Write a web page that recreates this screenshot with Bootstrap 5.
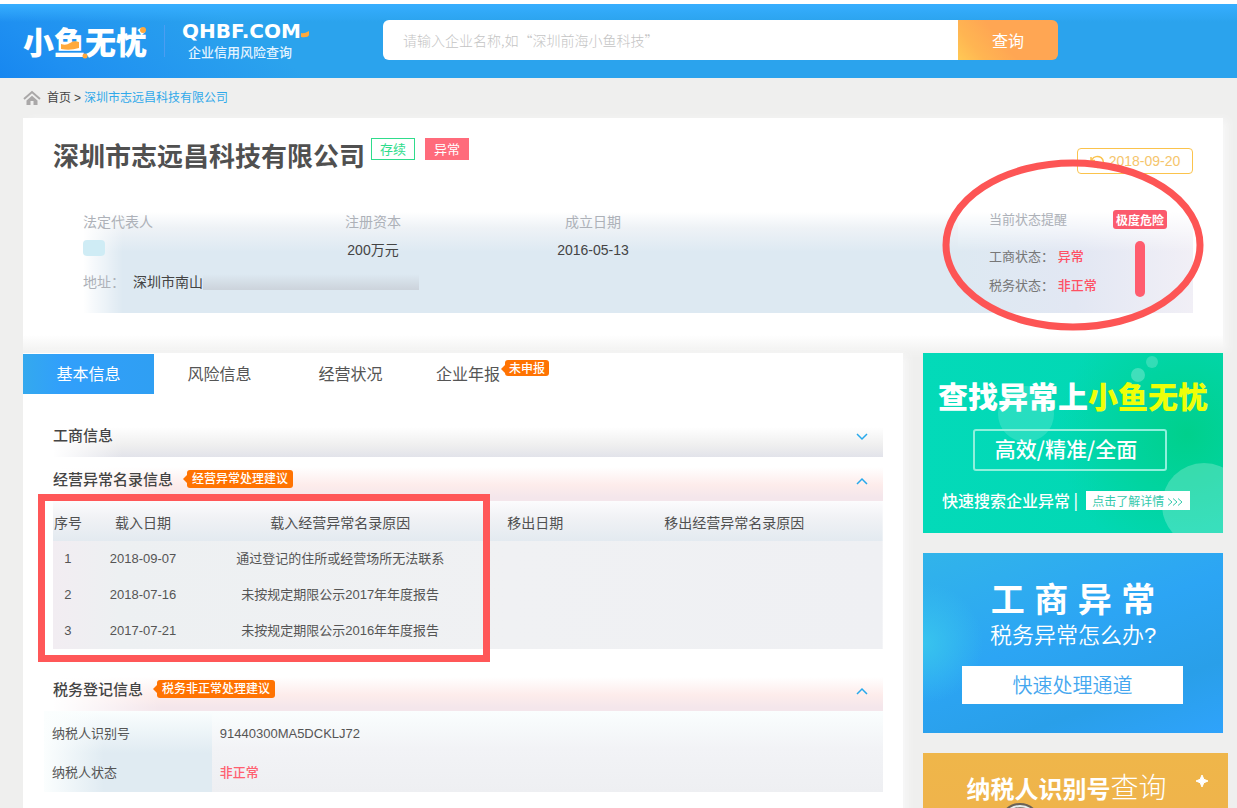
<!DOCTYPE html>
<html lang="zh-CN">
<head>
<meta charset="utf-8">
<meta name="viewport" content="width=device-width, initial-scale=1">
<title>深圳市志远昌科技有限公司 - 小鱼无忧</title>
<link rel="stylesheet" href="https://cdn.jsdelivr.net/npm/bootstrap@5.3.0/dist/css/bootstrap.min.css">
<style>
  body { font-family: "Liberation Sans", "Noto Sans CJK SC", sans-serif; font-size: 13px; line-height: 20px; color: #555; background: #efefee; overflow-x: hidden; }
  a { text-decoration: none; }
  .cjk { font-family: "Noto Sans CJK SC", sans-serif; }
  .page-x { padding-left: 23px; padding-right: 14px; }

  /* header */
  .site-head { border-top: 4px solid #fff; height: 78px; background: linear-gradient(to bottom, #36aeff 0, rgba(54,174,255,0) 18px), linear-gradient(38deg, #1787f0 0, #1f90f1 50px, #2ba3ed 190px); }
  .brand-name { font-size: 31px; line-height: 40px; font-weight: 900; color: #fff; width: 124px; white-space: nowrap; }
  .brand-dots { left: 0; top: 0; }
  .brand-split { width: 1px; height: 32px; margin: 0 17px; background: #4b9df2; }
  .brand-url { font: bold 20px/22px "DejaVu Sans", sans-serif; color: #fff; }
  .brand-sub { font-size: 13px; line-height: 20px; font-weight: 500; color: #e4f4ff; padding-left: 6px; }
  .search-box { width: 675px; margin-left: 74px; margin-bottom: 2px; }
  .search-box .form-control { height: 40px; border: 0; border-radius: 6px; padding: 0 20px; font-size: 14px; }
  .search-box .form-control::placeholder { color: #c4c4c4; font-weight: 300; }
  .search-box .btn { width: 100px; border: 0; border-radius: 6px; color: #fff; font-size: 16px; background: linear-gradient(50deg, #ffc955 0, #ffb552 20%, #ffa653 45%, #ffa653 100%); }

  .crumbs { height: 40px; font-size: 12px; color: #444; }
  .crumbs svg { margin-right: 6px; }
  .crumbs span { margin: 0 3px; }
  .crumbs a { color: #444; }
  .crumbs .here { color: #2fa9ea; }

  /* company card */
  .company { background: linear-gradient(to top, #f1f1f0 0, #fff 18px); padding: 19px 30px 40px; box-shadow: 6px 0 8px -2px #f8f8f8; }
  .company h1 { font-size: 26px; line-height: 40px; font-weight: 700; color: #505050; margin: 0 6px 0 0; }
  .tagbox { width: 44px; height: 22px; line-height: 21px; font-size: 13px; text-align: center; border: 1px solid #2fdc8c; color: #2fdc8c; margin: 1px 10px 0 0; }
  .tagbox.bad { border-color: #ff6b7b; background: #ff6b7b; color: #fff; }
  .refresh { height: 26px; width: 116px; border: 1px solid #fbc34c; border-radius: 4px; background: #fff; color: #f5c56c; font-size: 14px; padding: 0; margin-top: 11px; white-space: nowrap; }
  .facts { margin: 35px 0 0 30px; font-size: 14px; background: linear-gradient(to right, #fff 0, rgba(255,255,255,0) 40px), linear-gradient(to bottom, #fff 0, #eef2f6 16px, #dde9f2 40px, #dde9f2 100%); color: #444; }
  .facts .dim { color: #adb1b8; }
  .facts-body { padding-bottom: 21px; }
  .fact-a { width: 235px; } .fact-b { width: 110px; } .fact-c { width: 110px; margin-left: 110px; }
  .masked { width: 216px; height: 16px; background: linear-gradient(to bottom, rgba(204,211,219,0) 0, #ccd3db 100%); }
  .redact { width: 22px; height: 16px; background: #cfecf5; border-radius: 4px; }
  .risk { width: 235px; padding: 0 26px 0 31px; font-size: 13px; line-height: 29px; color: #777; background: linear-gradient(to bottom, #fff 0, rgba(255,255,255,0) 40px), linear-gradient(to right, #dde9f2 0, #e2e7f3 50%, #f1eff6 100%); }
  .risk .dim { line-height: 16px; padding-bottom: 14px; }
  .risk b { color: #ff5064; font-weight: 500; }
  .risk-pill { background: #fb5a6d; color: #fff; font-size: 12px; font-weight: 700; line-height: 19px; height: 19px; width: 54px; text-align: center; border-radius: 3px; white-space: nowrap; margin-top: -2px; }
  .risk-bar { width: 10px; height: 56px; border-radius: 5px; background: #ff5c6e; margin: 12px 22px 0 0; }
  .ring { right: -12px; top: -54px; pointer-events: none; }

  /* main column */
  .main-col { background: #fff; padding-top: 1px; box-shadow: 6px 0 8px -2px #f8f8f8; margin-right: 20px; }
  .tabs-row .nav-link { width: 131px; height: 40px; padding: 0; font-size: 16px; line-height: 42px; color: #555; text-align: center; border-radius: 0; }
  .tabs-row .nav-link.active { color: #fff; background: linear-gradient(to right, #34a9ee 0, #319ffb 30%, #2f9ff3 100%); }
  .tabs-row .nav-link.tab-last { text-align: left; padding-left: 20px; }
  .hint { position: relative; display: inline-block; background: #ff7302; color: #fff; font-size: 12px; line-height: 18px; height: 18px; padding: 0 5px; border-radius: 3px; font-weight: 500; white-space: nowrap; }
  .hint::before { content: ""; position: absolute; left: -4px; top: 5px; border: 4px solid transparent; border-left: 0; border-right-color: #ff7302; }
  a.hint:hover { color: #fff; }
  .hint.tab-tip { position: absolute; left: 89px; top: 6px; height: 16px; line-height: 18px; padding: 0 4px; }
  .blocks { padding: 19px 20px 30px 30px; }
  .band { height: 44px; padding-top: 2px; background: linear-gradient(to right, #fff 0, rgba(255,255,255,0) 70px), linear-gradient(to bottom, #fff 14px, #efefef 32px, #e2e3ea 44px); }
  .band.warm { background: linear-gradient(to right, #fff 0, rgba(255,255,255,0) 110px), linear-gradient(to bottom, #fff 10px, #fdeceb 28px, #f4e6eb 40px); }
  .band h2 { font-size: 15px; line-height: 20px; font-weight: 500; color: #444; margin: 0 14px 0 0; }
  .band .hint { margin-bottom: 2px; }
  .fold { border: 0; background: none; padding: 0 15px 0 0; line-height: 1; }
  .marked { margin-bottom: 18px; }
  .mark-frame { left: -15px; top: -7px; bottom: -13px; width: 452px; border: 7px solid #ff5758; pointer-events: none; }
  .plain { width: 100%; table-layout: fixed; }
  .records th { height: 40px; font-size: 14px; font-weight: 400; text-align: center; color: #505050; padding: 4px 0 0; }
  .records th:last-child { padding-right: 8px; }
  .records thead { background: linear-gradient(to bottom, #fcfcfd 0, #f1f2f5 40%, #e3eaf0 100%); }
  .records tbody { background: linear-gradient(to right, #f2edf2 0, #edf0f2 8%, #f0f1f3 55%, #eff0f3 100%); }
  .records td { height: 36px; text-align: center; padding: 0; white-space: nowrap; }
  .tax { margin-left: -9px; }
  .tax th, .tax td { padding: 0 8px; height: 39px; font-weight: 400; }
  .tax tr:first-child > * { height: 42px; padding-top: 3px; }
  .tax table { background: linear-gradient(to bottom, #fafefe 0, #f2f3f6 38px, #eeeff2 100%); }
  .tax th { background: linear-gradient(to right, #fbfefe 0, rgba(251,254,254,0) 60px), #e0ebf2; }
  .tax tr:first-child th { background: linear-gradient(to right, #fbfefe 0, rgba(251,254,254,0) 60px), linear-gradient(to bottom, #fafefe, #e0ebf2); }
  .tax b { color: #ff6070; font-weight: 500; }

  /* banners */
  .side { width: 300px; flex: none; }
  .promo { display: block; height: 180px; margin-bottom: 20px; color: #fff; text-align: center; position: relative; overflow: hidden; }
  .promo:hover { color: #fff; }
  .promo > * { position: relative; }
  .promo > svg { position: absolute; left: 0; top: 0; width: 100%; height: 100%; }
  .p-green { background: linear-gradient(to right, #03dab9 0, rgba(3,218,185,0) 60%), radial-gradient(circle at 88% 45%, #00d08c 0, #02d8b4 130px); padding-top: 20px; }
  .p-green .big { font-size: 30px; line-height: 44px; font-weight: 900; white-space: nowrap; }
  .p-green .big span { color: #eeff08; }
  .p-green .framed { width: 194px; height: 42px; margin: 12px auto 19px 50px; border: 2px solid #8ff0dc; border-radius: 3px; font-size: 21px; line-height: 34px; font-weight: 500; padding-right: 8px; }
  .p-green .foot { font-size: 16px; line-height: 20px; font-weight: 500; padding-left: 19px; white-space: nowrap; }
  .p-green .more { background: #fff; color: #35c9ad; font-size: 12px; line-height: 19px; height: 19px; width: 104px; margin-left: 8px; font-weight: 400; }
  .p-blue { font-family: "Liberation Sans", "Noto Sans CJK SC", sans-serif; background: radial-gradient(circle at 0 50%, #38c4ee 0, rgba(56,196,238,0) 60px), linear-gradient(160deg, #31b4ea 0, #2ca5f4 45%, #299fe9 75%, #2fa3fb 100%); padding-top: 25px; }
  .p-blue .big { font-size: 34px; line-height: 44px; font-weight: 700; }
  .p-blue .mid { font-size: 22px; line-height: 28px; font-weight: 350; }
  .p-blue .go { background: #fff; color: #45a7ef; width: 221px; height: 38px; margin: 16px 0 0 39px; font-size: 20px; line-height: 40px; font-weight: 350; }
  .p-gold { background: linear-gradient(to bottom, #efb64a 0, #efb44b 50px, #f9ab4b 100%); width: 305px; padding: 12px 18px 0 0; margin-bottom: 0; }
  .p-gold .line { font-size: 24px; line-height: 42px; font-weight: 700; white-space: nowrap; }
  .p-gold .line span { font-size: 28px; font-weight: 300; }
  .screen { height: 100vh; overflow: hidden auto; scrollbar-width: none; }
</style>
</head>
<body>
<div class="screen">
<header class="site-head page-x d-flex align-items-center cjk">
  <div class="position-relative">
    <div class="brand-name">小鱼无忧</div>
    <svg class="brand-dots position-absolute" width="126" height="42" viewBox="0 0 126 42" aria-hidden="true"><path d="M38 23q5 2 9-1t9-1v6q-9 3-18 1z" fill="#ffa93c"/><circle cx="62" cy="35" r="2.5" fill="#ffa93c"/><circle cx="120" cy="9" r="3" fill="#ffa93c"/></svg>
  </div>
  <div class="brand-split"></div>
  <div>
    <div class="brand-url d-flex align-items-end">QHBF.COM<svg width="8" height="8" viewBox="0 0 8 8" class="mb-1" aria-hidden="true"><path d="M0 3q3 1 8-2v4q-1 3-8 2z" fill="#ffa93c"/></svg></div>
    <div class="brand-sub">企业信用风险查询</div>
  </div>
  <form class="search-box input-group flex-nowrap" onsubmit="return false">
    <input class="form-control" type="text" aria-label="企业名称" placeholder="请输入企业名称,如“深圳前海小鱼科技”">
    <button class="btn" type="submit">查询</button>
  </form>
</header>

<nav class="crumbs page-x d-flex align-items-center" aria-label="面包屑">
  <svg width="18" height="16" viewBox="0 0 18 16" aria-hidden="true"><path d="M1 9l8-7 8 7" fill="none" stroke="#aaa8a8" stroke-width="2"/><path d="M3.500 10.500L9 5.700l5.500 4.800V15H10.500v-4h-3v4h-4z" fill="#aaa8a8"/></svg>
  <a href="#">首页</a><span>&gt;</span><a href="#" class="here">深圳市志远昌科技有限公司</a>
</nav>

<main class="page-x">
  <section class="company">
    <div class="d-flex align-items-start">
      <h1>深圳市志远昌科技有限公司</h1>
      <span class="tagbox">存续</span>
      <span class="tagbox bad">异常</span>
      <button class="refresh ms-auto" type="button">
        <svg width="15" height="14" viewBox="0 0 15 14" class="me-1" aria-hidden="true"><path d="M2 4.500A6 5.500 0 1 1 2 9.500M1 2v3.500h4" fill="none" stroke="#fbc34c" stroke-width="1.500"/></svg>2018-09-20
      </button>
    </div>
    <div class="facts d-flex position-relative">
      <div class="facts-body flex-grow-1">
        <div class="d-flex">
          <div class="fact-a"><div class="dim">法定代表人</div><div class="redact mt-2"></div></div>
          <div class="fact-b text-center"><div class="dim">注册资本</div><div class="mt-2">200万元</div></div>
          <div class="fact-c text-center"><div class="dim">成立日期</div><div class="mt-2">2016-05-13</div></div>
        </div>
        <div class="d-flex align-items-center pt-2 mt-1"><span class="dim me-2">地址：</span><span>深圳市南山</span><span class="masked"></span></div>
      </div>
      <div class="risk d-flex justify-content-between">
        <div>
          <div class="dim">当前状态提醒</div>
          <div>工商状态： <b>异常</b></div>
          <div>税务状态： <b>非正常</b></div>
        </div>
        <div class="d-flex flex-column align-items-end">
          <span class="risk-pill cjk">极度危险</span>
          <span class="risk-bar"></span>
        </div>
      </div>
      <svg class="ring position-absolute" width="264" height="174" viewBox="0 0 264 174" aria-hidden="true"><ellipse cx="132" cy="87" rx="127" ry="82" fill="none" stroke="#fd5555" stroke-width="7"/></svg>
    </div>
  </section>

  <div class="d-flex">
    <section class="main-col flex-grow-1">
      <nav class="nav tabs-row">
        <a class="nav-link active" href="#">基本信息</a>
        <a class="nav-link" href="#">风险信息</a>
        <a class="nav-link" href="#">经营状况</a>
        <a class="nav-link tab-last position-relative" href="#">企业年报<span class="hint tab-tip">未申报</span></a>
      </nav>
      <div class="blocks">
        <div class="band d-flex align-items-center">
          <h2>工商信息</h2>
          <button class="fold ms-auto" type="button" aria-label="展开"><svg width="12" height="8" viewBox="0 0 12 8"><path d="M1 1l5 5 5-5" fill="none" stroke="#27a9ec" stroke-width="1.500"/></svg></button>
        </div>
        <div class="band warm d-flex align-items-center">
          <h2>经营异常名录信息</h2><a href="#" class="hint">经营异常处理建议</a>
          <button class="fold ms-auto" type="button" aria-label="收起"><svg width="12" height="8" viewBox="0 0 12 8"><path d="M1 7l5-5 5 5" fill="none" stroke="#27a9ec" stroke-width="1.500"/></svg></button>
        </div>
        <div class="marked position-relative">
          <table class="plain records">
            <colgroup><col style="width:3.600%"><col style="width:14.500%"><col style="width:33%"><col style="width:14%"><col></colgroup>
            <thead><tr><th class="text-nowrap">序号</th><th>载入日期</th><th>载入经营异常名录原因</th><th>移出日期</th><th>移出经营异常名录原因</th></tr></thead>
            <tbody>
              <tr><td>1</td><td>2018-09-07</td><td>通过登记的住所或经营场所无法联系</td><td></td><td></td></tr>
              <tr><td>2</td><td>2018-07-16</td><td>未按规定期限公示2017年年度报告</td><td></td><td></td></tr>
              <tr><td>3</td><td>2017-07-21</td><td>未按规定期限公示2016年年度报告</td><td></td><td></td></tr>
            </tbody>
          </table>
          <div class="mark-frame position-absolute"></div>
        </div>
        <div class="band warm d-flex align-items-center">
          <h2>税务登记信息</h2><a href="#" class="hint">税务非正常处理建议</a>
          <button class="fold ms-auto" type="button" aria-label="收起"><svg width="12" height="8" viewBox="0 0 12 8"><path d="M1 7l5-5 5 5" fill="none" stroke="#27a9ec" stroke-width="1.500"/></svg></button>
        </div>
        <div class="tax">
          <table class="plain">
            <colgroup><col style="width:20%"><col></colgroup>
            <tbody>
              <tr><th scope="row">纳税人识别号</th><td>91440300MA5DCKLJ72</td></tr>
              <tr><th scope="row">纳税人状态</th><td><b>非正常</b></td></tr>
            </tbody>
          </table>
        </div>
      </div>
    </section>

    <aside class="side cjk">
      <a href="#" class="promo p-green">
        <svg viewBox="0 0 300 180" aria-hidden="true"><g fill="#fff"><circle cx="103" cy="61" r="28" opacity=".15"/><circle cx="215" cy="22" r="7" opacity=".25"/><circle cx="229" cy="9" r="6" opacity=".2"/><circle cx="281" cy="152" r="42" opacity=".22"/></g></svg>
        <div class="big">查找异常上<span>小鱼无忧</span></div>
        <div class="framed">高效/精准/全面</div>
        <div class="foot d-flex align-items-center"><span>快速搜索企业异常 |</span><span class="more">点击了解详情 <svg width="17" height="8" viewBox="0 0 17 8" aria-hidden="true"><path d="M1 0.500l4 3.500-4 3.500M6 0.500l4 3.500-4 3.500M11 0.500l4 3.500-4 3.500" fill="none" stroke="#35c9ad"/></svg></span></div>
      </a>
      <a href="#" class="promo p-blue">
        <div class="big">工 商 异 常</div>
        <div class="mid">税务异常怎么办?</div>
        <div class="go">快速处理通道</div>
      </a>
      <a href="#" class="promo p-gold">
        <svg viewBox="0 0 305 180" aria-hidden="true"><path d="M279 22l1.800 4.200 4.200 1.800-4.200 1.800-1.800 4.200-1.800-4.200-4.200-1.800 4.200-1.800z" fill="#fff" stroke="#fff"/><circle cx="97" cy="71" r="20" fill="#e6eef0" stroke="#6b6256" stroke-width="2"/><circle cx="97" cy="71" r="16" fill="#f4f7f7" stroke="#8d8579" stroke-width="2"/></svg>
        <div class="line">纳税人识别号<span>查询</span></div>
      </a>
    </aside>
  </div>
</main>
</div>
<script src="https://cdn.jsdelivr.net/npm/bootstrap@5.3.0/dist/js/bootstrap.bundle.min.js"></script>
</body>
</html>
